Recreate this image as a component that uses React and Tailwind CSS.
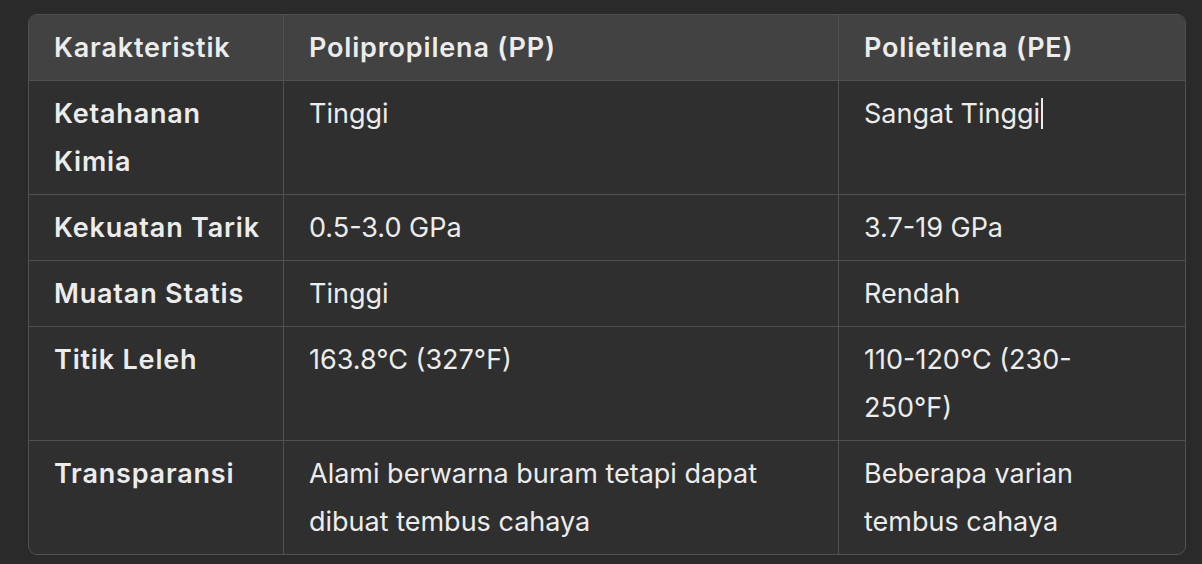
import React from "react";

const rows = [
  ["Ketahanan Kimia", "Tinggi", "Sangat Tinggi", true],
  ["Kekuatan Tarik", "0.5-3.0 GPa", "3.7-19 GPa"],
  ["Muatan Statis", "Tinggi", "Rendah"],
  ["Titik Leleh", "163.8°C (327°F)", "110-120°C (230-250°F)"],
  ["Transparansi", "Alami berwarna buram tetapi dapat dibuat tembus cahaya", "Beberapa varian tembus cahaya"],
];

export default function App() {
  return (
    <div className="w-[1202px] h-[564px] bg-[#2a2a2a] pl-[28px] pt-[14px] text-[#ececec]" style={{ fontFamily: "Inter, 'Noto Sans', sans-serif" }}>
      <div className="w-[1158px] border border-[#505050] rounded-[9px] overflow-hidden bg-[#2f2f2f] text-[27px] leading-[48px]">
        <div className="grid grid-cols-[254px_555px_1fr] bg-[#424242] font-semibold tracking-[0.03em]">
          <div className="pl-[25px] pr-[20px] pt-[9px] pb-[8px]">Karakteristik</div>
          <div className="pl-[25px] pr-[20px] pt-[9px] pb-[8px] border-l border-[#505050]">Polipropilena (PP)</div>
          <div className="pl-[25px] pr-[20px] pt-[9px] pb-[8px] border-l border-[#505050]">Polietilena (PE)</div>
        </div>
        {rows.map(([a, b, c, cursor], i) => (
          <div key={i} className="grid grid-cols-[254px_555px_1fr] border-t border-[#505050]">
            <div className="pl-[25px] pr-[16px] pt-[9px] pb-[8px] font-semibold tracking-[0.03em]">{a}</div>
            <div className="pl-[25px] pr-[20px] pt-[9px] pb-[8px] border-l border-[#505050]">{b}</div>
            <div className="pl-[25px] pr-[32px] pt-[9px] pb-[8px] border-l border-[#505050]">
              {c}
              {cursor && <span className="inline-block w-[2px] h-[31px] bg-[#ececec] align-middle ml-[1px] -mt-[4px]"></span>}
            </div>
          </div>
        ))}
      </div>
    </div>
  );
}
